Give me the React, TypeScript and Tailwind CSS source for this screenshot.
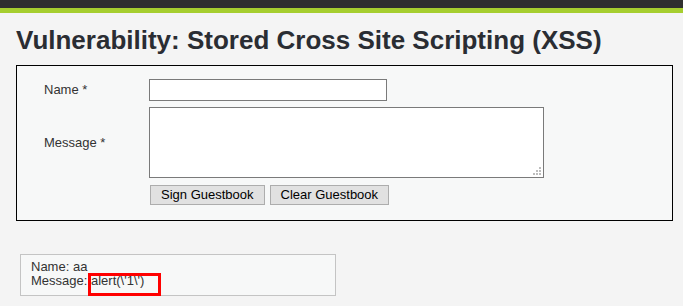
export default function App() {
  return (
    <div className="min-h-[306px] w-[683px] bg-[#f4f4f4] font-['Liberation_Sans',Arial,sans-serif] text-[13px] text-[#333]">
      {/* header bars */}
      <div className="h-[8px] bg-[#2f2f2f]" />
      <div className="h-[5px] bg-[#a6ce2f]" />

      <div className="pl-[16px]">
        <h1 className="mt-[12px] whitespace-nowrap font-['Liberation_Sans',Arial,sans-serif] text-[26px] font-bold leading-[30px] text-[#2a2d33]">
          Vulnerability: Stored Cross Site Scripting (XSS)
        </h1>

        {/* guestbook form */}
        <div className="mt-[10px] w-[657px] border border-black bg-[#f7f8f8] pb-[15px] pl-[27px] pt-[13px]">
          <div className="grid grid-cols-[105px_auto] gap-y-[6px]">
            <label className="self-center">Name *</label>
            <input className="h-[22px] w-[238px] border border-[#7a7a7a] bg-white" />

            <label className="self-center">Message *</label>
            <div className="relative h-[71px] w-[395px]">
              <textarea className="h-full w-full resize-none border border-[#7a7a7a] bg-white" />
              <svg className="absolute bottom-[3px] right-[3px]" width="8" height="8" viewBox="0 0 8 8">
                <rect x="6" y="0" width="2" height="2" fill="#bdbdbd" />
                <rect x="3" y="3" width="2" height="2" fill="#bdbdbd" />
                <rect x="6" y="3" width="2" height="2" fill="#bdbdbd" />
                <rect x="0" y="6" width="2" height="2" fill="#bdbdbd" />
                <rect x="3" y="6" width="2" height="2" fill="#bdbdbd" />
                <rect x="6" y="6" width="2" height="2" fill="#bdbdbd" />
              </svg>
            </div>

            <div />
            <div className="mt-[1px] flex gap-[5px] pl-[1px]">
              <button className="h-[20px] border border-[#adadad] bg-[#e1e1e1] px-[10px] leading-[18px] text-black">
                Sign Guestbook
              </button>
              <button className="h-[20px] border border-[#adadad] bg-[#e1e1e1] px-[10px] leading-[18px] text-black">
                Clear Guestbook
              </button>
            </div>
          </div>
        </div>

        {/* comments */}
        <div className="relative ml-[4px] mt-[33px] h-[42px] w-[316px] border border-[#c4c4c4] bg-[#f7f8f8] px-[10px] pt-[5px] leading-[14px]">
          <div>Name: aa</div>
          <div>Message: alert(\'1\')</div>
          <div className="absolute left-[67px] top-[18px] h-[23px] w-[73px] border-[3px] border-[#ff0000]" />
        </div>
      </div>
    </div>
  );
}
